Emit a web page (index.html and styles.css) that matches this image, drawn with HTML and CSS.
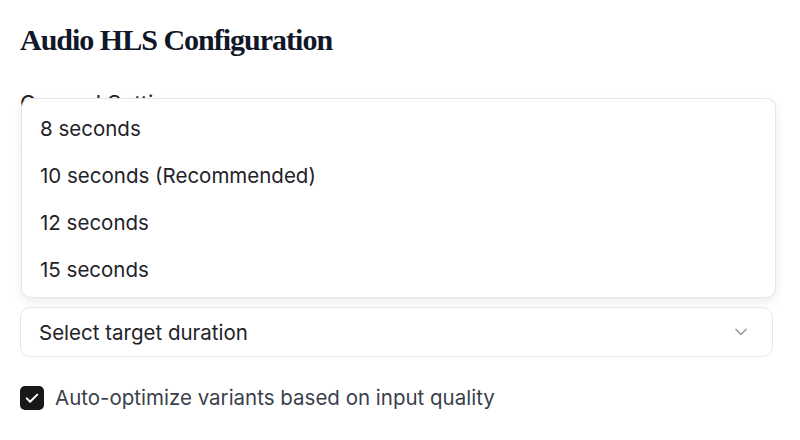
FILE: index.html
```html
<!DOCTYPE html>
<html>
<head>
<meta charset="utf-8">
<link rel="stylesheet" href="styles.css">
</head>
<body>
<div class="page">
  <h1 class="title">Audio HLS Configuration</h1>
  <h2 class="section">General Settings</h2>
  <div class="field">
    <label class="field-label">Segment Duration</label>
    <div class="select-wrap">
      <div class="select">
        <span>Select target duration</span>
        <svg class="chev" width="20" height="20" viewBox="0 0 24 24" fill="none" stroke="currentColor" stroke-width="2" stroke-linecap="round" stroke-linejoin="round"><path d="M6 9l6 6 6-6"/></svg>
      </div>
      <div class="menu">
        <div class="item">8 seconds</div>
        <div class="item">10 seconds (Recommended)</div>
        <div class="item">12 seconds</div>
        <div class="item">15 seconds</div>
      </div>
    </div>
  </div>
  <label class="check">
    <span class="box"><svg width="18" height="18" viewBox="0 0 24 24" fill="none" stroke="#fff" stroke-width="2.6" stroke-linecap="round" stroke-linejoin="round"><path d="M5 12.5l4.5 4.5L19 7.5"/></svg></span>
    <span class="check-label">Auto-optimize variants based on input quality</span>
  </label>
</div>
</body>
</html>
```
FILE: styles.css
```css
html, body { margin: 0; padding: 0; background: #fff; }
body { font-family: Inter, "Noto Sans", sans-serif; color: #1f2328; }
.page { width: 753px; padding: 20px 0 0 20px; }
.title {
  font-family: "Liberation Serif", "DejaVu Serif", serif;
  font-weight: 700; font-size: 30px; line-height: 40px;
  margin: 0; color: #0f1729; letter-spacing: -1px;
}
.section { font-size: 22px; font-weight: 400; margin: 28px 0 0; line-height: 30px; color: #1f2328; }
.field { margin-top: 14px; }
.field-label { display: block; font-size: 16px; line-height: 24px; margin-bottom: 151px; }
.select-wrap { position: relative; }
.select {
  height: 50px; box-sizing: border-box; border: 1px solid #e6e7ea; border-radius: 10px;
  display: flex; align-items: center; justify-content: space-between;
  padding: 0 21px 0 18px; font-size: 20.5px; color: #1f2328;
}
.chev { color: #9a9ca3; }
.menu {
  position: absolute; left: 1px; right: -3px; bottom: calc(100% + 9px);
  background: #fff; border: 1px solid #e4e5e8; border-radius: 10px;
  box-shadow: 0 4px 10px rgba(0,0,0,0.08);
  padding: 6px 0; box-sizing: border-box; height: 200px;
}
.item { height: 47px; display: flex; align-items: center; padding-left: 18px; font-size: 20.5px; color: #1f2328; }
.check { display: flex; align-items: center; gap: 11px; margin-top: 28px; }
.box { width: 24px; height: 24px; border-radius: 5px; background: #18181b; display: flex; align-items: center; justify-content: center; }
.check-label { font-size: 20.5px; color: #3a3f4c; }
```
